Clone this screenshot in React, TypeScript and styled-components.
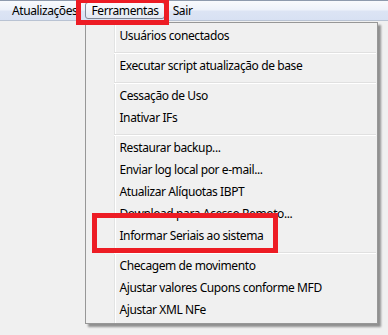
import styled, { createGlobalStyle } from "styled-components";

type MenuEntry = { label: string; marked?: boolean } | "sep";

const entries: MenuEntry[] = [
  { label: "Usuários conectados" },
  "sep",
  { label: "Executar script atualização de base" },
  "sep",
  { label: "Cessação de Uso" },
  { label: "Inativar IFs" },
  "sep",
  { label: "Restaurar backup..." },
  { label: "Enviar log local por e-mail..." },
  { label: "Atualizar Alíquotas IBPT" },
  { label: "Download para Acesso Remoto..." },
  { label: "Informar Seriais ao sistema", marked: true },
  "sep",
  { label: "Checagem de movimento" },
  { label: "Ajustar valores Cupons conforme MFD" },
  { label: "Ajustar XML NFe" },
];

const App = () => {
  return (
    <Window>
      <GlobalStyle />
      <MenuBar>
        <TopItem>Atualizações</TopItem>
        <TopItem $active>
          Ferramentas
          <Dropdown>
            {entries.map((entry, i) =>
              entry === "sep" ? (
                <Separator key={i} />
              ) : (
                <DropItem key={i}>
                  {entry.label}
                  {entry.marked && <SeriaisMark />}
                </DropItem>
              )
            )}
          </Dropdown>
          <FerramentasMark />
        </TopItem>
        <TopItem>Sair</TopItem>
      </MenuBar>
      <Body />
    </Window>
  );
};

const GlobalStyle = createGlobalStyle`
  html, body {
    margin: 0;
    padding: 0;
    background: #f0f0f0;
  }
  body {
    font-family: "Noto Sans", "Open Sans", sans-serif;
    font-size: 12px;
    letter-spacing: -0.4px;
    color: #000;
  }
`;

const Window = styled.div`
  width: 388px;
  height: 335px;
  overflow: hidden;
  background: #f0f0f0;
  display: flex;
  flex-direction: column;
`;

const MenuBar = styled.div`
  height: 21px;
  box-sizing: border-box;
  border-top: 1px solid #8e9aad;
  border-bottom: 1px solid #b9c3d3;
  background: linear-gradient(#f9fafd 0%, #eef2fa 45%, #dce4f4 55%, #d8e1f3 100%);
  display: flex;
  align-items: center;
  gap: 2px;
  padding-left: 6px;
`;

const TopItem = styled.div<{ $active?: boolean }>`
  position: relative;
  height: 17px;
  box-sizing: border-box;
  line-height: 15px;
  padding: 0 5px;
  border: 1px solid ${(p) => (p.$active ? "#7f8796" : "transparent")};
  border-radius: 3px;
  background: ${(p) =>
    p.$active ? "linear-gradient(#fbfcfe, #e3e8f2)" : "transparent"};
  white-space: nowrap;
`;

const Dropdown = styled.div`
  position: absolute;
  top: 19px;
  left: -1px;
  z-index: 2;
  width: 293px;
  box-sizing: border-box;
  border: 1px solid #979797;
  padding: 2px;
  background: linear-gradient(
      to right,
      transparent 28px,
      #e2e3e3 28px,
      #e2e3e3 29px,
      #ffffff 29px,
      #ffffff 30px,
      transparent 30px
    ),
    #f0f0f0;
  box-shadow: 3px 3px 2px rgba(0, 0, 0, 0.4);
  display: flex;
  flex-direction: column;
`;

const DropItem = styled.div`
  position: relative;
  height: 22px;
  line-height: 22px;
  padding-left: 31px;
  white-space: nowrap;
`;

const Separator = styled.div`
  height: 8px;
  margin-left: 26px;
  margin-right: -1px;
  box-sizing: border-box;
  padding-top: 5px;

  &::after {
    content: "";
    display: block;
    height: 1px;
    background: #e0e0e0;
    border-bottom: 1px solid #ffffff;
  }
`;

const Mark = styled.span`
  position: absolute;
  box-sizing: border-box;
  border: 5px solid #ed1c24;
  pointer-events: none;
  z-index: 3;
`;

const FerramentasMark = styled(Mark)`
  left: -10px;
  top: -5px;
  width: 93px;
  height: 27px;
`;

const SeriaisMark = styled(Mark)`
  left: 4px;
  top: -12px;
  width: 186px;
  height: 40px;
`;

const Body = styled.div`
  flex: 1;
  background: #f0f0f0;
`;

export default App;
